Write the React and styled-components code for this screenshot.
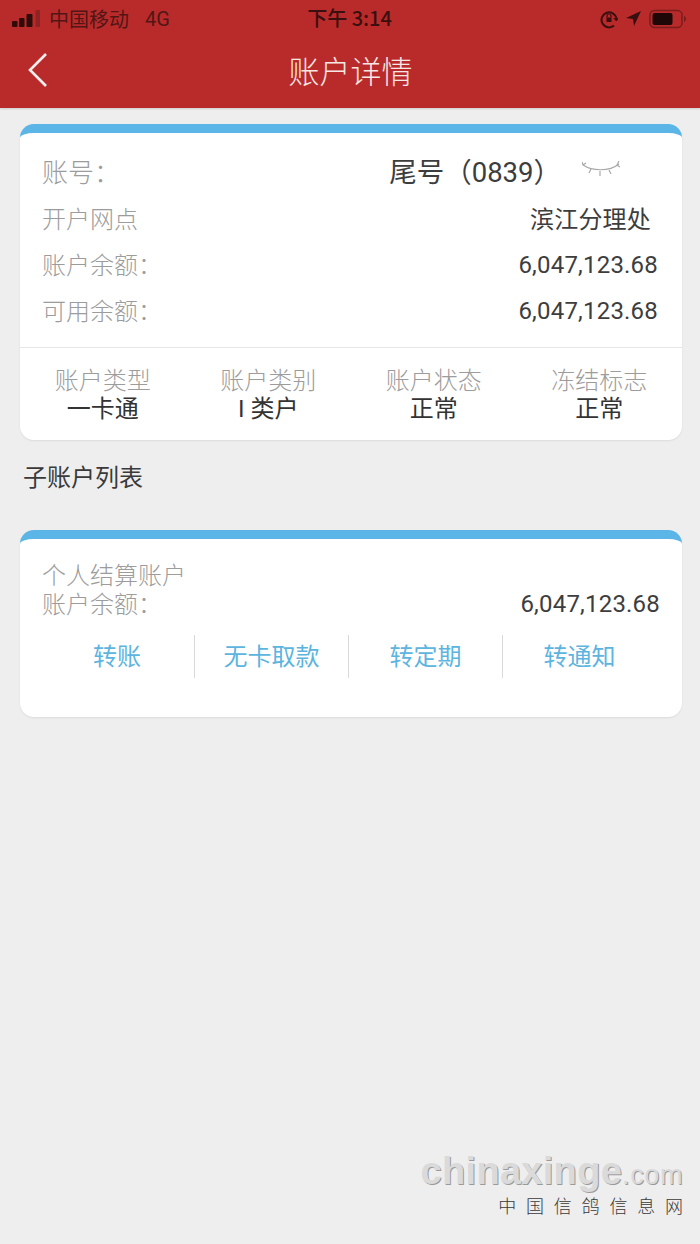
import React from "react";
import styled, { createGlobalStyle } from "styled-components";

const CJK = `"Noto Sans CJK SC", "Noto Sans", sans-serif`;
const NUM = `"Roboto", "Noto Sans CJK SC", sans-serif`;

const GlobalStyle = createGlobalStyle`
  html, body {
    margin: 0;
    padding: 0;
    background: #eeeeee;
  }
  * {
    box-sizing: border-box;
  }
`;

const Page = styled.div`
  position: relative;
  width: 700px;
  height: 1244px;
  overflow: hidden;
  background: #eeeeee;
  font-family: ${CJK};
`;

const Header = styled.header`
  height: 108px;
  background: #b92b2a;
  box-shadow: 0 1px 2px rgba(0, 0, 0, 0.15);
`;

const StatusBar = styled.div`
  height: 37px;
  padding: 0 13px 0 12px;
  display: grid;
  grid-template-columns: 1fr auto 1fr;
  align-items: center;
  color: #3c1212;
`;

const StatusLeft = styled.div`
  display: flex;
  align-items: center;
  color: #521616;
`;

const Carrier = styled.span`
  margin-left: 7px;
  font-size: 20px;
`;

const Network = styled.span`
  margin-left: 16px;
  font-family: ${NUM};
  font-size: 20px;
`;

const Time = styled.div`
  font-size: 20px;
  color: #3a0f0f;
  font-weight: 500;
  padding-bottom: 2px;
`;

const StatusRight = styled.div`
  display: flex;
  align-items: center;
  justify-content: flex-end;
  gap: 7px;
`;

const NavBar = styled.div`
  height: 71px;
  padding: 0 0 5px 27px;
  display: flex;
  align-items: center;
`;

const NavTitle = styled.h1`
  flex: 1;
  margin: 0 0 0 -48px;
  text-align: center;
  color: #f6e6e4;
  font-size: 31px;
  font-weight: 300;
  line-height: 40px;
`;

const Content = styled.main`
  padding: 16px 18px 0 20px;
`;

const Card = styled.section`
  background: #ffffff;
  border-radius: 14px;
  border-top: 9px solid #5bb5e6;
  box-shadow: 0 1px 2px rgba(0, 0, 0, 0.08);
  height: ${(p) => p.$height}px;
`;

const InfoBlock = styled.div`
  height: 215px;
  padding: 13px 24px 0 22px;
  border-bottom: 1px solid #e6e6e6;
`;

const InfoRow = styled.div`
  height: ${(p) => p.$height}px;
  display: flex;
  align-items: center;
  justify-content: space-between;
`;

const Label = styled.span`
  color: #9c9c9c;
  font-size: ${(p) => p.$size || 24}px;
  font-weight: 300;
  line-height: 29px;
`;

const Value = styled.span`
  color: #3d3d3d;
  font-family: ${NUM};
  font-size: 24px;
  letter-spacing: 0.2px;
  padding-right: ${(p) => p.$inset || 0}px;
  padding-top: ${(p) => p.$drop || 0}px;
`;

const TailGroup = styled.div`
  display: flex;
  align-items: center;
  gap: 21px;
  padding-right: 38px;
`;

const Tail = styled.span`
  color: #3d3d3d;
  font-family: ${NUM};
  font-size: 27.5px;
`;

const FlagGrid = styled.div`
  display: grid;
  grid-template-columns: repeat(4, 165.5px);
  padding-top: 16px;
`;

const Flag = styled.div`
  display: flex;
  flex-direction: column;
  align-items: center;
  font-size: 24px;
  line-height: 29px;
`;

const FlagLabel = styled.span`
  color: #9c9c9c;
  font-weight: 300;
`;

const FlagValue = styled.span`
  margin-top: 2px;
  color: #333333;
  font-family: ${NUM};
`;

const SectionTitle = styled.h2`
  margin: 18px 0 36px 3px;
  height: 36px;
  line-height: 36px;
  color: #3a3a3a;
  font-size: 24px;
  font-weight: 400;
`;

const SubBody = styled.div`
  padding: 20px 22px 0 22px;
`;

const SubRow = styled.div`
  display: flex;
  justify-content: space-between;
  align-items: center;
  height: 29px;
`;

const ActionRow = styled.div`
  display: grid;
  grid-template-columns: repeat(4, 154px);
  margin: 18px 0 0 -2px;
`;

const Action = styled.button`
  height: 43px;
  padding: 0 0 4px;
  border: 0;
  border-left: ${(p) => (p.$first ? "0" : "1px solid #d9d9d9")};
  background: none;
  color: #5cb4df;
  font-family: ${CJK};
  font-size: 24px;
`;

const Watermark = styled.div`
  position: absolute;
  right: 17px;
  top: 1150px;
  text-align: right;
`;

const WatermarkDomain = styled.div`
  font-family: "Liberation Sans", sans-serif;
  font-weight: 700;
  font-size: 38px;
  line-height: 42px;
  letter-spacing: 0.3px;
  color: #dadada;
  text-shadow: 1px 1px 0 #9a9a9a;
  white-space: nowrap;
`;

const DomainSuffix = styled.span`
  font-weight: 400;
  font-size: 27px;
  letter-spacing: 0.6px;
`;

const WatermarkName = styled.div`
  margin-top: -3px;
  margin-right: -9.8px;
  font-size: 18px;
  line-height: 24px;
  letter-spacing: 9.8px;
  color: #3a3a3a;
  font-weight: 300;
  white-space: nowrap;
`;

const Signal = () => (
  <svg width="30" height="18" viewBox="0 0 30 18">
    <rect x="0" y="11" width="5.5" height="6" rx="1" fill="#2f0c0c" />
    <rect x="7" y="8" width="5.5" height="9" rx="1" fill="#2f0c0c" />
    <rect x="14.5" y="4" width="6" height="13" rx="1" fill="#2f0c0c" />
    <rect x="23.5" y="0" width="4.5" height="17" rx="1" fill="#8f2222" />
  </svg>
);

const LockIcon = () => (
  <svg width="18" height="20" viewBox="0 0 18 20" fill="none" stroke="#3a0f0f" strokeWidth="2">
    <path d="M14 16.5A7.5 7.5 0 1 1 16.5 10" />
    <path d="M13.8 9.2L16.5 12L18 9.2" fill="#3a0f0f" strokeWidth="1" />
    <rect x="6.5" y="8.5" width="5" height="4.5" fill="#3a0f0f" stroke="none" />
    <path d="M7 8.5V7a2 2 0 0 1 4 0v1.5" strokeWidth="1.2" />
  </svg>
);

const LocationIcon = () => (
  <svg width="17" height="17" viewBox="0 0 17 17">
    <path d="M16 1 L1 8 L8 9 L9 16 Z" fill="#3a0f0f" />
  </svg>
);

const Battery = () => (
  <svg width="38" height="20" viewBox="0 0 38 20">
    <rect x="1" y="1.5" width="32" height="17" rx="4.5" fill="none" stroke="#7a1d1d" strokeWidth="1.5" />
    <rect x="3.5" y="4" width="20" height="12" rx="2" fill="#1f0707" />
    <path d="M35 7v6c1.4-.5 2-1.6 2-3s-.6-2.5-2-3z" fill="#7a1d1d" />
  </svg>
);

const BackIcon = () => (
  <svg width="22" height="36" viewBox="0 0 22 36" fill="none" stroke="#f8eeee" strokeWidth="2.6">
    <path d="M19 2 L3 18 L19 34" />
  </svg>
);

const ClosedEye = () => (
  <svg width="38" height="18" viewBox="0 0 38 18" fill="none" stroke="#a9a9a9" strokeWidth="1.2">
    <path d="M1 4 C10 10 27 11 37 3" />
    <path d="M1 4 L0 1 M1 4 L4 2 M9 8 L7 12 M18 10 L18 15 M27 9 L29 13 M35 4 L38 6 M35 4 L37 0" />
  </svg>
);

const flags = [
  ["账户类型", "一卡通"],
  ["账户类别", "I 类户"],
  ["账户状态", "正常"],
  ["冻结标志", "正常"],
];

const actions = ["转账", "无卡取款", "转定期", "转通知"];

export default function App() {
  return (
    <Page>
      <GlobalStyle />
      <Header>
        <StatusBar>
          <StatusLeft>
            <Signal />
            <Carrier>中国移动</Carrier>
            <Network>4G</Network>
          </StatusLeft>
          <Time>下午 3:14</Time>
          <StatusRight>
            <LockIcon />
            <LocationIcon />
            <Battery />
          </StatusRight>
        </StatusBar>
        <NavBar>
          <BackIcon />
          <NavTitle>账户详情</NavTitle>
        </NavBar>
      </Header>
      <Content>
        <Card $height={316}>
          <InfoBlock>
            <InfoRow $height={48}>
              <Label $size={26}>账号：</Label>
              <TailGroup>
                <Tail>尾号（0839）</Tail>
                <ClosedEye />
              </TailGroup>
            </InfoRow>
            <InfoRow $height={46}>
              <Label>开户网点</Label>
              <Value $inset={7}>滨江分理处</Value>
            </InfoRow>
            <InfoRow $height={46}>
              <Label>账户余额：</Label>
              <Value $drop={4}>6,047,123.68</Value>
            </InfoRow>
            <InfoRow $height={46}>
              <Label>可用余额：</Label>
              <Value $drop={4}>6,047,123.68</Value>
            </InfoRow>
          </InfoBlock>
          <FlagGrid>
            {flags.map(([label, value]) => (
              <Flag key={label}>
                <FlagLabel>{label}</FlagLabel>
                <FlagValue>{value}</FlagValue>
              </Flag>
            ))}
          </FlagGrid>
        </Card>
        <SectionTitle>子账户列表</SectionTitle>
        <Card $height={187}>
          <SubBody>
            <SubRow>
              <Label>个人结算账户</Label>
            </SubRow>
            <SubRow>
              <Label>账户余额：</Label>
              <Value $drop={2}>6,047,123.68</Value>
            </SubRow>
            <ActionRow>
              {actions.map((name, i) => (
                <Action key={name} $first={i === 0}>
                  {name}
                </Action>
              ))}
            </ActionRow>
          </SubBody>
        </Card>
      </Content>
      <Watermark>
        <WatermarkDomain>
          chinaxinge<DomainSuffix>.com</DomainSuffix>
        </WatermarkDomain>
        <WatermarkName>中国信鸽信息网</WatermarkName>
      </Watermark>
    </Page>
  );
}
